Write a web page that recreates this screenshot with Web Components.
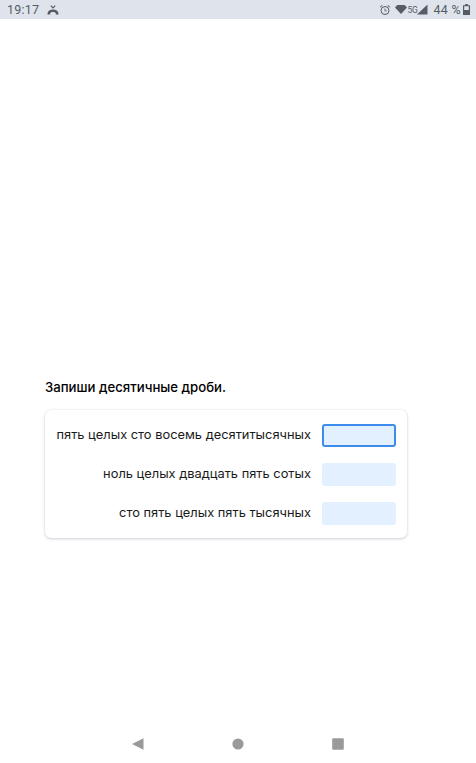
<!DOCTYPE html>
<html lang="ru">
<head>
<meta charset="utf-8">
<title>Запиши десятичные дроби</title>
<style>
html, body { margin: 0; height: 100%; background: #fff; }
body { font-family: "Inter", "Noto Sans", sans-serif; }
</style>
</head>
<body>
<app-screen>
  <status-bar></status-bar>
  <task-card title-text="Запиши десятичные дроби.">
    <answer-row text="пять целых сто восемь десятитысячных" focused></answer-row>
    <answer-row text="ноль целых двадцать пять сотых"></answer-row>
    <answer-row text="сто пять целых пять тысячных"></answer-row>
  </task-card>
  <nav-bar></nav-bar>
</app-screen>

<script>
const appScreenTemplate = document.createElement('template');
appScreenTemplate.innerHTML = `
<style>
:host { display: flex; flex-direction: column; height: 763px; overflow: hidden; }
</style>
<slot></slot>
`;

class AppScreen extends HTMLElement {
    constructor() {
        super();
        this.attachShadow({mode: 'open'});
        this.shadowRoot.appendChild(appScreenTemplate.content.cloneNode(true));
    }
}

const statusBarTemplate = document.createElement('template');
statusBarTemplate.innerHTML = `
<style>
:host { display: flex; align-items: center; height: 19px; flex: none; padding: 0 6px 0 7px; background: #dfe4ec; color: #565c64; font: 12.5px "Roboto", sans-serif; }
svg { display: block; fill: #565c64; }
.time { margin-right: 8px; letter-spacing: .2px; }
.spacer { flex: 1; }
.net { font-size: 8.5px; width: 10px; letter-spacing: -.2px; }
.pct { margin: 0 2px 0 5px; letter-spacing: .3px; }
</style>
<span class="time">19:17</span>
<svg width="12" height="10" viewBox="0 0 12 10">
  <path d="M3.800.6 6 2.800 8.200.6" fill="none" stroke="#565c64" stroke-width="1.200"/>
  <path d="M.5 8.400C.8 6 3 4.600 6 4.600s5.200 1.400 5.500 3.800v1.100H8.800V8.200C8.300 7.300 7.300 6.900 6 6.900s-2.300.4-2.800 1.300v1.300H.5z"/>
</svg>
<span class="spacer"></span>
<svg width="12" height="12" viewBox="0 0 12 12" style="margin-right:4px">
  <circle cx="6" cy="6.500" r="4" fill="none" stroke="#565c64" stroke-width="1"/>
  <path d="M5.600 4.500h.8v2h1.400v.8H5.600zM.8 3 3 1l.6.600-2.200 2zM11.200 3 9 1l-.6.600 2.200 2z"/>
</svg>
<svg width="12" height="11" viewBox="0 0 13 11">
  <path d="M0 3.200 2.500.5h8L13 3.200 6.500 10.500z"/>
</svg>
<span class="net">5G</span>
<svg width="11" height="11" viewBox="0 0 11 11">
  <path d="M10.500.5v10H0z"/>
</svg>
<span class="pct">44 %</span>
<svg width="7" height="11" viewBox="0 0 7 11">
  <path d="M2.200 0h2.600v1.200H7V11H0V1.200h2.200zM1.200 2.300V6h4.600V2.300z"/>
</svg>
`;

class StatusBar extends HTMLElement {
    constructor() {
        super();
        this.attachShadow({mode: 'open'});
        this.shadowRoot.appendChild(statusBarTemplate.content.cloneNode(true));
    }
}

const taskCardTemplate = document.createElement('template');
taskCardTemplate.innerHTML = `
<style>
:host { display: block; flex: 1; padding: 360px 69px 0 45px; color: #000; }
h2 { margin: 0 0 15px; font-size: 13.2px; line-height: 16px; font-weight: 500; }
.card { display: flex; flex-direction: column; gap: 16px; padding: 14px 11px 13px 11px; border-radius: 6px; background: #fff; box-shadow: 0 1px 3px rgba(60, 70, 110, .25), 0 0 2px rgba(60, 70, 110, .08); }
</style>
<h2></h2>
<div class="card"><slot></slot></div>
`;

class TaskCard extends HTMLElement {
    constructor() {
        super();
        this.attachShadow({mode: 'open'});
        this.shadowRoot.appendChild(taskCardTemplate.content.cloneNode(true));
        this.shadowRoot.querySelector('h2').textContent = this.getAttribute('title-text');
    }
}

const answerRowTemplate = document.createElement('template');
answerRowTemplate.innerHTML = `
<style>
:host { display: flex; align-items: center; justify-content: flex-end; gap: 11px; }
span { font-size: 12.85px; color: #1a1a1a; white-space: nowrap; padding-bottom: 2px; }
input { box-sizing: border-box; width: 74px; height: 23px; margin: 0; padding: 0 6px; border: 0; border-radius: 3px; outline: none; background: #e3f0ff; }
:host([focused]) input { border: 2px solid #3d8bea; }
</style>
<span></span>
<input type="text">
`;

class AnswerRow extends HTMLElement {
    constructor() {
        super();
        this.attachShadow({mode: 'open'});
        this.shadowRoot.appendChild(answerRowTemplate.content.cloneNode(true));
        this.shadowRoot.querySelector('span').textContent = this.getAttribute('text');
    }
}

const navBarTemplate = document.createElement('template');
navBarTemplate.innerHTML = `
<style>
:host { display: flex; align-items: center; justify-content: center; gap: 88px; height: 38px; flex: none; }
svg { display: block; width: 12px; height: 12px; fill: #9a9a9a; }
</style>
<svg viewBox="0 0 12 12"><path d="M0 6 11.500.2v11.600z"/></svg>
<svg viewBox="0 0 12 12"><circle cx="6" cy="6" r="5.600"/></svg>
<svg viewBox="0 0 12 12"><rect x=".2" y=".2" width="11.600" height="11.600" rx="1"/></svg>
`;

class NavBar extends HTMLElement {
    constructor() {
        super();
        this.attachShadow({mode: 'open'});
        this.shadowRoot.appendChild(navBarTemplate.content.cloneNode(true));
    }
}

window.customElements.define('app-screen', AppScreen);
window.customElements.define('status-bar', StatusBar);
window.customElements.define('task-card', TaskCard);
window.customElements.define('answer-row', AnswerRow);
window.customElements.define('nav-bar', NavBar);
</script>
</body>
</html>
